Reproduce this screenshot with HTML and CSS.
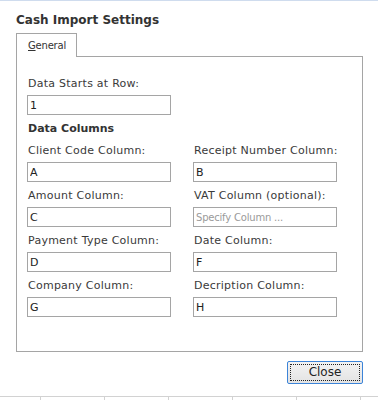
FILE: index.html
```html
<!DOCTYPE html>
<html lang="en">
<head>
    <meta charset="UTF-8">
    <title>Cash Import Settings</title>
    <link rel="stylesheet" href="styles.css">
</head>
<body>
    <div class="screen">
        <div class="dialog">
            <h1 class="dialog-title">Cash Import Settings</h1>

            <div class="tabs">
                <div class="tab tab-active"><span class="accel">G</span>eneral</div>
            </div>

            <div class="tab-panel">
                <div class="field">
                    <label>Data Starts at Row:</label>
                    <input type="text" value="1">
                </div>

                <h2 class="section-title">Data Columns</h2>

                <div class="grid">
                    <div class="field">
                        <label>Client Code Column:</label>
                        <input type="text" value="A">
                    </div>
                    <div class="field">
                        <label>Receipt Number Column:</label>
                        <input type="text" value="B">
                    </div>
                    <div class="field">
                        <label>Amount Column:</label>
                        <input type="text" value="C">
                    </div>
                    <div class="field">
                        <label>VAT Column (optional):</label>
                        <input type="text" placeholder="Specify Column ...">
                    </div>
                    <div class="field">
                        <label>Payment Type Column:</label>
                        <input type="text" value="D">
                    </div>
                    <div class="field">
                        <label>Date Column:</label>
                        <input type="text" value="F">
                    </div>
                    <div class="field">
                        <label>Company Column:</label>
                        <input type="text" value="G">
                    </div>
                    <div class="field">
                        <label>Decription Column:</label>
                        <input type="text" value="H">
                    </div>
                </div>
            </div>

            <div class="footer">
                <button class="close-btn"><span class="focus-ring">Close</span></button>
            </div>
        </div>
        <div class="grid-line"></div>
    </div>
</body>
</html>
```

FILE: styles.css
```css
* {
    margin: 0;
    padding: 0;
    box-sizing: border-box;
    font-family: 'DejaVu Sans', Verdana, sans-serif;
}

body {
    background-color: #ffffff;
    width: 378px;
    height: 401px;
    overflow: hidden;
}

.screen {
    height: 401px;
    border-top: 1px solid #cfdcee;
    display: flex;
    flex-direction: column;
}

.dialog {
    padding: 0 16px;
    flex: 1;
}

.dialog-title {
    font-size: 12px;
    font-weight: bold;
    line-height: 16px;
    color: #333333;
    margin-top: 11px;
    margin-bottom: 5px;
}

.tabs {
    display: flex;
}

.tab {
    width: 61px;
    height: 24px;
    border: 1px solid #a5a5a5;
    border-bottom: none;
    font-size: 10px;
    letter-spacing: -0.2px;
    line-height: 20px;
    padding: 2px 0 0 11px;
    color: #333333;
    background: #ffffff;
    margin-bottom: -1px;
    position: relative;
}

.accel {
    text-decoration: underline;
}

.tab-panel {
    width: 347px;
    height: 296px;
    border: 1px solid #a5a5a5;
    padding: 20px 10px 0 10px;
}

.field label {
    display: block;
    font-size: 11px;
    letter-spacing: 0.25px;
    line-height: 14px;
    white-space: nowrap;
    color: #3a3a3a;
    padding-left: 1px;
    margin-bottom: 4px;
}

.field input {
    display: block;
    width: 144px;
    height: 20px;
    border: 1px solid #a5a5a5;
    font-size: 11px;
    color: #222222;
    padding: 0 2px;
    outline: none;
}

.field input::placeholder {
    color: #9a9a9a;
    font-size: 10px;
    letter-spacing: -0.2px;
}

.section-title {
    font-size: 11px;
    font-weight: bold;
    line-height: 14px;
    color: #333333;
    padding-left: 1px;
    margin-top: 7px;
    margin-bottom: 8px;
}

.grid {
    display: grid;
    grid-template-columns: 144px 144px;
    column-gap: 22px;
    row-gap: 7px;
}

.footer {
    display: flex;
    justify-content: flex-end;
    width: 347px;
    margin-top: 9px;
}

.close-btn {
    width: 76px;
    height: 23px;
    border: 1px solid #3c84d8;
    border-radius: 2px;
    background: linear-gradient(#f3f3f3, #e3e3e3);
    padding: 2px;
    font-size: 12px;
    color: #222222;
}

.focus-ring {
    display: block;
    height: 100%;
    border: 1px dotted #222222;
    line-height: 15px;
}

.grid-line {
    height: 4px;
    border-top: 1px solid #d2d2d2;
    margin-bottom: 1px;
    background: repeating-linear-gradient(to right, transparent 0, transparent 40px, #d2d2d2 40px, #d2d2d2 41px, transparent 41px, transparent 64px);
}
```
